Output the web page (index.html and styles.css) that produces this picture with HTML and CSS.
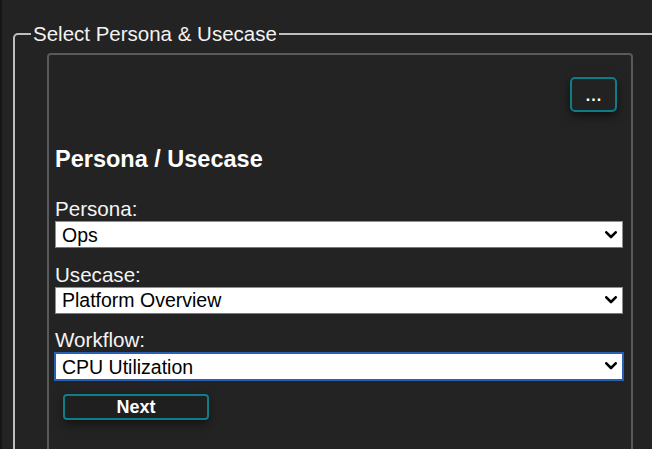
FILE: index.html
```html
<!DOCTYPE html>
<html lang="en">
<head>
<meta charset="utf-8">
<title>Select Persona &amp; Usecase</title>
<link rel="stylesheet" href="styles.css">
</head>
<body>
<div class="screen">
  <fieldset class="group">
    <legend class="group-title">Select Persona &amp; Usecase</legend>
    <div class="panel">
      <div class="toolbar">
        <button class="more" type="button">...</button>
      </div>
      <h2 class="title">Persona / Usecase</h2>

      <label class="field-label" for="persona">Persona:</label>
      <div class="select-wrap">
        <select id="persona" class="select"><option>Ops</option></select>
        <svg class="chev" viewBox="0 0 12 8" width="12" height="8" aria-hidden="true"><path d="M1.3 1.3 L6 6 L10.7 1.3" fill="none" stroke="#000" stroke-width="2.6" stroke-linecap="round" stroke-linejoin="round"/></svg>
      </div>

      <label class="field-label" for="usecase">Usecase:</label>
      <div class="select-wrap">
        <select id="usecase" class="select"><option>Platform Overview</option></select>
        <svg class="chev" viewBox="0 0 12 8" width="12" height="8" aria-hidden="true"><path d="M1.3 1.3 L6 6 L10.7 1.3" fill="none" stroke="#000" stroke-width="2.6" stroke-linecap="round" stroke-linejoin="round"/></svg>
      </div>

      <label class="field-label" for="workflow">Workflow:</label>
      <div class="select-wrap select-wrap--focus">
        <select id="workflow" class="select select--focus"><option>CPU Utilization</option></select>
        <svg class="chev" viewBox="0 0 12 8" width="12" height="8" aria-hidden="true"><path d="M1.3 1.3 L6 6 L10.7 1.3" fill="none" stroke="#000" stroke-width="2.6" stroke-linecap="round" stroke-linejoin="round"/></svg>
      </div>

      <button class="next" type="button">Next</button>
    </div>
  </fieldset>
</div>
</body>
</html>
```

FILE: styles.css
```css
html, body {
  margin: 0;
  padding: 0;
  background: #ffffff;
}

.screen {
  box-sizing: border-box;
  height: 449px;
  background: #232323;
  border-left: 2px solid #151515;
  overflow: hidden;
  padding: 22px 0 0 11px;
  font-family: "Liberation Sans", Arial, sans-serif;
}

.group {
  box-sizing: border-box;
  margin: 0;
  width: 700px;
  min-height: 520px;
  border: 2px solid #bdbdbd;
  border-radius: 5px;
  padding: 0 0 0 16px;
}

.group-title {
  padding: 0 2px;
  font-size: 20.5px;
  line-height: 24px;
  color: #f2f2f2;
}

.panel {
  box-sizing: border-box;
  margin: 7px 0 0 16px;
  width: 586px;
  min-height: 480px;
  border: 2px solid #5a5a5a;
  border-radius: 4px;
  padding: 22px 8px 0 6px;
}

.toolbar {
  display: flex;
  justify-content: flex-end;
  padding-right: 6px;
}

.more {
  box-sizing: border-box;
  width: 47px;
  height: 35px;
  padding: 3px 0 0 1px;
  border: 2px solid #0e7d88;
  border-radius: 5px;
  background: #222222;
  color: #ffffff;
  font-family: "Liberation Sans", Arial, sans-serif;
  font-weight: bold;
  font-size: 16px;
  letter-spacing: 1px;
  box-shadow: 0 4px 10px rgba(0, 0, 0, 0.55);
}

.title {
  margin: 34px 0 0;
  font-size: 23.5px;
  line-height: 27px;
  font-weight: bold;
  color: #ffffff;
}

.field-label {
  display: block;
  font-size: 20.6px;
  line-height: 24px;
  color: #f4f4f4;
}

.title + .field-label {
  margin-top: 24px;
}

.select-wrap {
  position: relative;
  height: 27px;
  margin-bottom: 14.5px;
}

.select {
  box-sizing: border-box;
  display: block;
  width: 100%;
  height: 27px;
  margin: 0;
  padding: 0 0 0 6px;
  -webkit-appearance: none;
  appearance: none;
  border: 1px solid #8f8f8f;
  border-bottom-color: #7a7a7a;
  border-radius: 0;
  background: #ffffff;
  color: #000000;
  font-family: "Liberation Sans", Arial, sans-serif;
  font-size: 19.5px;
}

.select--focus {
  width: calc(100% + 2px);
  height: 29px;
  margin-left: -1px;
  padding-left: 6px;
  border: 2px solid #2a60b4;
  outline: none;
}

.chev {
  position: absolute;
  right: 6px;
  top: 50%;
  transform: translateY(-50%);
  pointer-events: none;
}

.select-wrap--focus .chev {
  top: 14px;
  right: 6px;
}

.next {
  box-sizing: border-box;
  display: block;
  margin: 2px 0 0 8px;
  width: 146px;
  height: 26px;
  padding: 1px 0 0;
  border: 2px solid #0f7d88;
  border-radius: 4px;
  background: #1f1f1f;
  color: #ffffff;
  font-family: "Liberation Sans", Arial, sans-serif;
  font-weight: bold;
  font-size: 18px;
  box-shadow: 0 4px 10px rgba(0, 0, 0, 0.45);
}
```
